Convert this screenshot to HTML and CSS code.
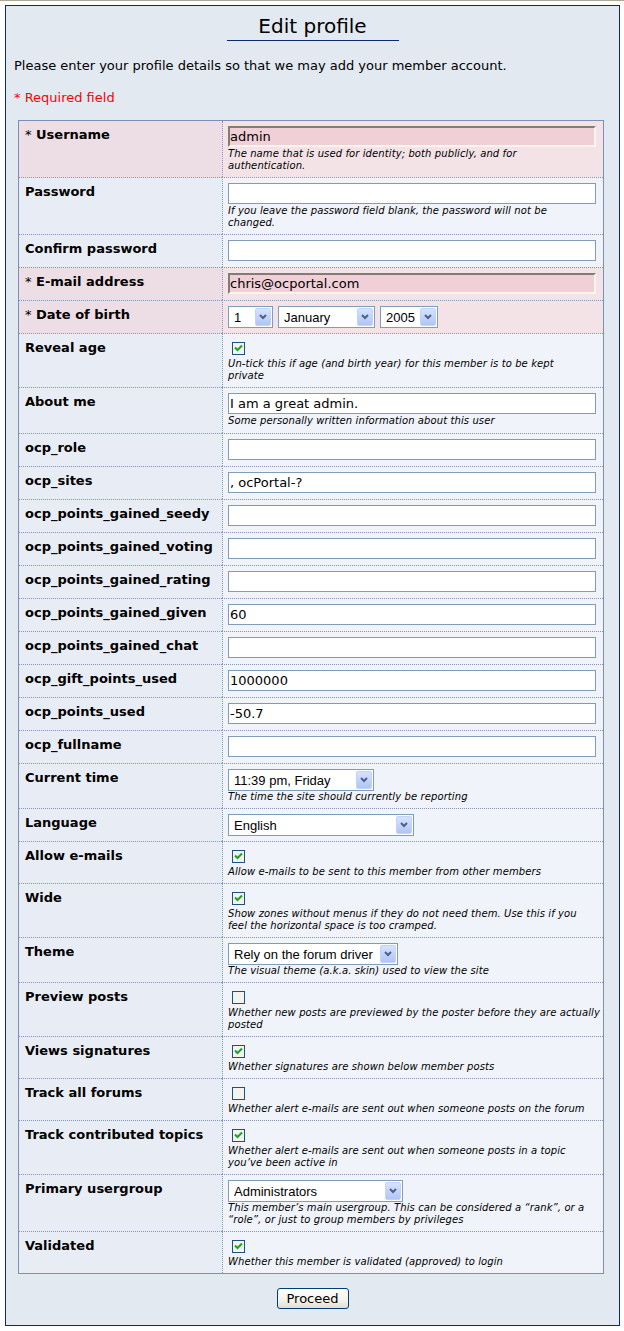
FILE: index.html
```html
<!DOCTYPE html>
<html lang="en">
<head>
<meta charset="utf-8">
<title>Edit profile</title>
<link rel="stylesheet" href="styles.css">
</head>
<body>
<div class="page">
  <div class="box">
    <h1 class="title">Edit profile</h1>
    <p class="intro">Please enter your profile details so that we may add your member account.</p>
    <p class="required-note">* Required field</p>

    <form class="form-grid">
      <div class="label req"><span class="star">*</span> Username</div>
      <div class="value req">
        <input class="text text--req" type="text" value="admin">
        <div class="desc">The name that is used for identity; both publicly, and for<br>authentication.</div>
      </div>

      <div class="label">Password</div>
      <div class="value">
        <input class="text" type="password" value="">
        <div class="desc">If you leave the password field blank, the password will not be<br>changed.</div>
      </div>

      <div class="label">Confirm password</div>
      <div class="value"><input class="text" type="password" value=""></div>

      <div class="label req"><span class="star">*</span> E-mail address</div>
      <div class="value req"><input class="text text--req" type="text" value="chris@ocportal.com"></div>

      <div class="label req"><span class="star">*</span> Date of birth</div>
      <div class="value req">
        <div class="dob">
          <span class="select select--day"><select class="select__native"><option>1</option></select><span class="select__btn"><svg class="chev" viewBox="0 0 8 6" width="8" height="6"><polyline points="1,1 4,4 7,1"/></svg></span></span>
          <span class="select select--month"><select class="select__native"><option>January</option></select><span class="select__btn"><svg class="chev" viewBox="0 0 8 6" width="8" height="6"><polyline points="1,1 4,4 7,1"/></svg></span></span>
          <span class="select select--year"><select class="select__native"><option>2005</option></select><span class="select__btn"><svg class="chev" viewBox="0 0 8 6" width="8" height="6"><polyline points="1,1 4,4 7,1"/></svg></span></span>
        </div>
      </div>

      <div class="label">Reveal age</div>
      <div class="value">
        <svg class="check" viewBox="0 0 13 13" width="13" height="13"><rect class="check__box" x="0.5" y="0.5" width="12" height="12"/><polyline class="check__tick" points="3,5.5 5.5,8 10,3.5"/></svg>
        <div class="desc">Un-tick this if age (and birth year) for this member is to be kept<br>private</div>
      </div>

      <div class="label">About me</div>
      <div class="value">
        <input class="text" type="text" value="I am a great admin.">
        <div class="desc desc--spaced">Some personally written information about this user</div>
      </div>

      <div class="label">ocp_role</div>
      <div class="value"><input class="text" type="text" value=""></div>

      <div class="label">ocp_sites</div>
      <div class="value"><input class="text" type="text" value=", ocPortal-?"></div>

      <div class="label">ocp_points_gained_seedy</div>
      <div class="value"><input class="text" type="text" value=""></div>

      <div class="label">ocp_points_gained_voting</div>
      <div class="value"><input class="text" type="text" value=""></div>

      <div class="label">ocp_points_gained_rating</div>
      <div class="value"><input class="text" type="text" value=""></div>

      <div class="label">ocp_points_gained_given</div>
      <div class="value"><input class="text" type="text" value="60"></div>

      <div class="label">ocp_points_gained_chat</div>
      <div class="value"><input class="text" type="text" value=""></div>

      <div class="label">ocp_gift_points_used</div>
      <div class="value"><input class="text" type="text" value="1000000"></div>

      <div class="label">ocp_points_used</div>
      <div class="value"><input class="text" type="text" value="-50.7"></div>

      <div class="label">ocp_fullname</div>
      <div class="value"><input class="text" type="text" value=""></div>

      <div class="label">Current time</div>
      <div class="value">
        <span class="select select--time"><select class="select__native"><option>11:39 pm, Friday</option></select><span class="select__btn"><svg class="chev" viewBox="0 0 8 6" width="8" height="6"><polyline points="1,1 4,4 7,1"/></svg></span></span>
        <div class="desc">The time the site should currently be reporting</div>
      </div>

      <div class="label">Language</div>
      <div class="value">
        <span class="select select--lang"><select class="select__native"><option>English</option></select><span class="select__btn"><svg class="chev" viewBox="0 0 8 6" width="8" height="6"><polyline points="1,1 4,4 7,1"/></svg></span></span>
      </div>

      <div class="label">Allow e-mails</div>
      <div class="value">
        <svg class="check" viewBox="0 0 13 13" width="13" height="13"><rect class="check__box" x="0.5" y="0.5" width="12" height="12"/><polyline class="check__tick" points="3,5.5 5.5,8 10,3.5"/></svg>
        <div class="desc">Allow e-mails to be sent to this member from other members</div>
      </div>

      <div class="label">Wide</div>
      <div class="value">
        <svg class="check" viewBox="0 0 13 13" width="13" height="13"><rect class="check__box" x="0.5" y="0.5" width="12" height="12"/><polyline class="check__tick" points="3,5.5 5.5,8 10,3.5"/></svg>
        <div class="desc">Show zones without menus if they do not need them. Use this if you<br>feel the horizontal space is too cramped.</div>
      </div>

      <div class="label">Theme</div>
      <div class="value">
        <span class="select select--theme"><select class="select__native"><option>Rely on the forum driver</option></select><span class="select__btn"><svg class="chev" viewBox="0 0 8 6" width="8" height="6"><polyline points="1,1 4,4 7,1"/></svg></span></span>
        <div class="desc">The visual theme (a.k.a. skin) used to view the site</div>
      </div>

      <div class="label">Preview posts</div>
      <div class="value">
        <svg class="check" viewBox="0 0 13 13" width="13" height="13"><rect class="check__box" x="0.5" y="0.5" width="12" height="12"/></svg>
        <div class="desc">Whether new posts are previewed by the poster before they are actually<br>posted</div>
      </div>

      <div class="label">Views signatures</div>
      <div class="value">
        <svg class="check" viewBox="0 0 13 13" width="13" height="13"><rect class="check__box" x="0.5" y="0.5" width="12" height="12"/><polyline class="check__tick" points="3,5.5 5.5,8 10,3.5"/></svg>
        <div class="desc">Whether signatures are shown below member posts</div>
      </div>

      <div class="label">Track all forums</div>
      <div class="value">
        <svg class="check" viewBox="0 0 13 13" width="13" height="13"><rect class="check__box" x="0.5" y="0.5" width="12" height="12"/></svg>
        <div class="desc">Whether alert e-mails are sent out when someone posts on the forum</div>
      </div>

      <div class="label">Track contributed topics</div>
      <div class="value">
        <svg class="check" viewBox="0 0 13 13" width="13" height="13"><rect class="check__box" x="0.5" y="0.5" width="12" height="12"/><polyline class="check__tick" points="3,5.5 5.5,8 10,3.5"/></svg>
        <div class="desc">Whether alert e-mails are sent out when someone posts in a topic<br>you’ve been active in</div>
      </div>

      <div class="label">Primary usergroup</div>
      <div class="value">
        <span class="select select--group"><select class="select__native"><option>Administrators</option></select><span class="select__btn"><svg class="chev" viewBox="0 0 8 6" width="8" height="6"><polyline points="1,1 4,4 7,1"/></svg></span></span>
        <div class="desc">This member’s main usergroup. This can be considered a “rank”, or a<br>“role”, or just to group members by privileges</div>
      </div>

      <div class="label">Validated</div>
      <div class="value">
        <svg class="check" viewBox="0 0 13 13" width="13" height="13"><rect class="check__box" x="0.5" y="0.5" width="12" height="12"/><polyline class="check__tick" points="3,5.5 5.5,8 10,3.5"/></svg>
        <div class="desc">Whether this member is validated (approved) to login</div>
      </div>
    </form>

    <button class="btn" type="button">Proceed</button>
  </div>
</div>
</body>
</html>
```

FILE: styles.css
```css
html, body {
  margin: 0;
  padding: 0;
  background: #ffffff;
}

body {
  border-top: 1px solid #aca899;
  font-family: "DejaVu Sans", Verdana, sans-serif;
  font-size: 13px;
  color: #000;
}

.page {
  margin: 4px 4px 5px 5px;
}

.box {
  border: 1px solid #0c2b6c;
  background: #e2e9f1;
  padding: 8px 0 16px 0;
}

.title {
  width: 172px;
  margin: 0 auto;
  padding: 0 0 2px 0;
  border-bottom: 1px solid #0c2b6c;
  font-size: 20px;
  line-height: 24px;
  font-weight: normal;
  text-align: center;
}

.intro {
  margin: 17px 8px 0 8px;
  line-height: 16px;
}

.required-note {
  margin: 16px 8px 0 8px;
  line-height: 16px;
  color: #ff0000;
}

.form-grid {
  display: grid;
  grid-template-columns: 203px 1fr;
  margin: 14px 15px 0 12px;
  border: 1px solid #7b8fb8;
}

.label,
.value {
  border-top: 1px dotted #7f93bb;
}

.label:nth-child(-n+2),
.value:nth-child(-n+2) {
  border-top: none;
}

.label {
  padding: 6px 2px 4px 6px;
  background: #e8edf5;
  font-weight: bold;
  line-height: 16px;
  white-space: nowrap;
}

.value {
  padding: 5px 7px 5px 5px;
  background: #f0f3f9;
  border-left: 1px dotted #7f93bb;
  min-width: 0;
}

.label.req {
  background: #eddde4;
}

.value.req {
  background: #f3e3e7;
}

.star {
  font-weight: normal;
}

.text {
  display: block;
  box-sizing: border-box;
  width: 100%;
  height: 21px;
  margin: 0 0 1px 0;
  padding: 0 0 0 1px;
  border: 1px solid #7f9db9;
  background: #ffffff;
  font-family: "DejaVu Sans", Verdana, sans-serif;
  font-size: 13px;
  color: #000;
  outline: none;
}

.text--req {
  border-width: 2px;
  border-style: solid;
  border-color: #7f7d75 #f8f5ed #f8f5ed #7f7d75;
  padding-left: 0;
  background: #f0cfd7;
}

.desc {
  font-size: 10px;
  line-height: 12px;
  font-style: italic;
  letter-spacing: 0.1px;
  white-space: nowrap;
}

.desc--spaced {
  padding-bottom: 1px;
}

.dob {
  display: flex;
  gap: 5px;
}

.select {
  display: flex;
  align-items: center;
  box-sizing: border-box;
  height: 22px;
  padding: 1px;
  border: 1px solid #7f9db9;
  background: #ffffff;
}

.select__native {
  flex: 1 1 auto;
  width: 0;
  min-width: 0;
  height: 100%;
  margin: 0;
  padding: 0 0 0 4px;
  border: 0;
  background: transparent;
  -webkit-appearance: none;
  appearance: none;
  font-family: "Liberation Sans", Arial, sans-serif;
  font-size: 13px;
  color: #000;
  outline: none;
}

.select__btn {
  flex: 0 0 auto;
  display: flex;
  align-items: center;
  justify-content: center;
  box-sizing: border-box;
  width: 16px;
  height: 18px;
  border: 1px solid #c1d2fb;
  border-radius: 2px;
  background: linear-gradient(#d6e2fe, #b1c5f5);
}

.chev {
  display: block;
}

.chev polyline {
  fill: none;
  stroke: #4d6185;
  stroke-width: 2;
}

.select--day { width: 45px; }
.select--month { width: 97px; }
.select--year { width: 58px; }
.select--time { width: 146px; }
.select--lang { width: 186px; }
.select--theme { width: 170px; }
.select--group { width: 175px; }

.check {
  display: block;
  margin: 3px 3px 3px 4px;
}

.check__box {
  fill: #f3f3ef;
  stroke: #1c5180;
  stroke-width: 1;
}

.check__tick {
  fill: none;
  stroke: #21a121;
  stroke-width: 2;
}

.btn {
  display: block;
  width: 72px;
  height: 21px;
  margin: 14px auto 0 auto;
  padding: 0;
  border: 1px solid #003c74;
  border-radius: 3px;
  background: linear-gradient(#ffffff, #f4f2ea 60%, #e3ded2);
  font-family: "DejaVu Sans", Verdana, sans-serif;
  font-size: 13px;
  color: #000;
}
```
